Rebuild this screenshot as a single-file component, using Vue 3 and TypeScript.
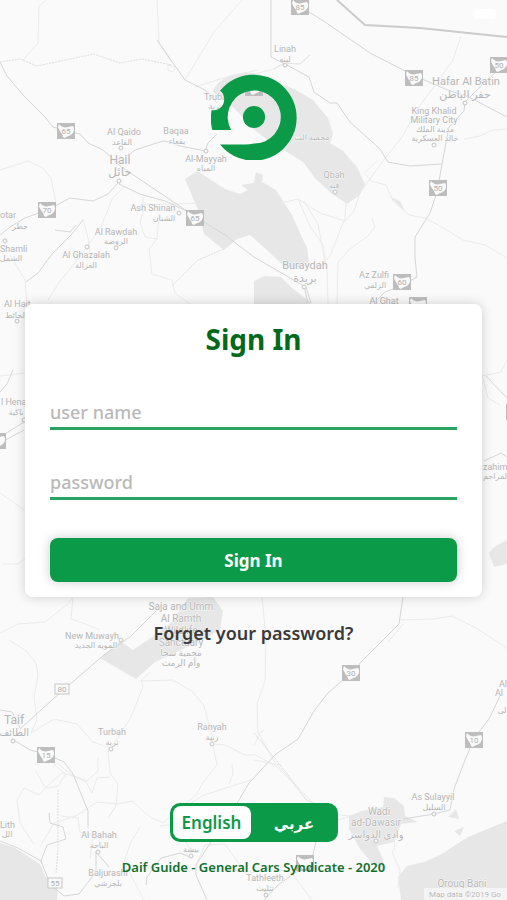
<script setup lang="ts">
import { ref } from 'vue'

interface Label {
  x: number
  y: number
  size: number
  text: string
  anchor?: 'start' | 'middle' | 'end'
}

interface Sign {
  x: number
  y: number
  text: string
}

type Language = 'en' | 'ar'

const username = ref('')
const password = ref('')
const language = ref<Language>('en')

const areas: string[] = [
  'M185 179L197 171L225 189L240 194L248 190L241 185L254 183L256 172L263 175L262 182L276 190L292 215L300 233L307 248L309 262L298 269L285 267L269 252L250 235L237 239L224 250L204 234L198 210Z',
  'M213 92C218 76 242 70 258 74L294 89L313 100L328 118L333 134L330 143L343 151L357 167L365 184L360 195L347 204L331 193L315 178L303 162L287 152L270 142L252 128L234 108Z',
  'M254 281L264 276L281 277L292 288L308 300L320 318L254 318Z',
  'M100 658L120 641L133 650L155 635L172 622L188 598L213 597L223 611L220 630L196 643L155 662L136 679L119 669Z',
  'M0 843L15 848L40 864L45 876L58 890L57 900L0 900Z',
  'M507 821L468 837L440 855L424 862L407 866L398 877L401 900L507 900Z',
  'M349 816L362 811L383 807L384 797L394 798L404 806L405 816L418 822L401 824L394 842L377 846L383 859L384 870L371 862L360 849L349 829Z',
  'M489 553L494 547L507 540L507 564L494 567Z',
  'M448 817L456 809L459 819Z',
  'M454 831L464 827L460 836Z',
  'M390 197L400 201L405 211Z',
]

const minorRoads: string[] = [
  'M46 0L39 6L38 43L23 60',
  'M242 0L214 32L185 80',
  'M157 0L159 43L172 63',
  'M168 65L176 67L173 72L168 70Z',
  'M195 87L230 76L258 70',
  'M0 170L28 161L43 168L51 178L56 203',
  'M124 187L112 199L101 227L76 262L60 281L48 300',
  'M83 219L88 238L90 252',
  'M143 197V213L140 222L145 237L157 239L149 249L152 274L172 280L175 293L190 304',
  'M143 205L200 203M157 239L159 213',
  'M10 255L25 280L27 304',
  'M255 74L274 69L284 63L300 64L310 55',
  'M461 36L453 60L436 84L418 108L402 137L383 161L362 190L346 202L345 218L330 256L317 270',
  'M377 161L364 173L371 181L386 185L393 201L409 215L425 218L440 226L463 240L485 245L507 258',
  'M281 203L298 199L320 213L345 221L354 211L359 196',
  'M298 199L310 226L323 245L327 270L328 304',
  'M304 201L318 224L326 267',
  'M372 218L375 227L368 236L350 249L338 262L337 304',
  'M464 139L480 136L493 130L507 129',
  'M0 376L25 373M0 493L26 511M3 564L18 564L26 558',
  'M482 375L488 398L500 405M482 376L501 372L507 360',
  'M0 633L18 624L45 622L68 604L73 596',
  'M73 596L71 619L85 624L100 630',
  'M9 640L25 650L36 663L38 675L34 697L37 719L31 733L54 719L77 724L93 742L111 748',
  'M151 672L141 680L143 687L131 717L118 738L108 750L110 773L118 784L116 806L108 818',
  'M141 681L173 680L193 692L204 706L212 735L213 744L225 745L245 755L254 755',
  'M213 745L217 765L202 784L197 794L163 823L150 817L132 801L118 804L97 802L76 816L54 823L40 847',
  'M98 757L98 771L86 782L73 776L62 773L49 784L39 795L24 788L17 801L20 823L34 844',
  'M110 777L97 778L92 793L85 780L72 775L57 763',
  'M36 771L44 786L47 788L58 786L66 774L53 764',
  'M254 779L229 787L204 795L185 807',
  'M232 764L233 774L229 784',
  'M262 595L266 640L265 681L257 704L258 732L273 760L295 784L309 799L320 813L350 816',
  'M254 754L277 767L292 782L307 800',
  'M400 620L434 619L452 616L476 628L507 648',
  'M403 624L388 642',
  'M140 827L131 842L124 862L134 881L144 900',
  'M160 826L176 824L185 813M190 850L184 837L174 812',
  'M254 745L260 733L264 730M254 760L281 765',
  'M338 820L350 816M393 824L395 848L392 852L400 870L398 888',
  'M90 858L93 835L80 832L78 818L61 816',
  'M196 865L205 845L225 844L246 874L269 868L291 872L312 900',
]

const dottedRoads: string[] = [
  'M0 62L20 59L37 66L94 54L120 63L142 59L172 65',
  'M274 69L284 63L300 64L310 55',
  'M172 286L198 260L224 249',
  'M254 733L285 771L306 800L319 805',
  'M58 790V850L56 874',
]

const majorRoads: string[] = [
  'M0 62L7 76L24 96L45 117L53 127L66 131L80 134L88 143L103 150L112 158L119 165L129 172L175 203L199 219L225 235L254 257L304 286',
  'M126 157L135 150L163 141L170 142L180 146L205 151L208 143L217 134',
  'M119 182L108 194L93 201L70 198L47 210L25 218L10 227L0 235',
  'M119 184L140 194L165 201L195 215',
  'M83 220L71 235L52 254L38 273L26 282',
  'M55 230L70 232L76 225',
  'M157 40L185 80L205 90L217 103',
  'M301 7L325 22L370 53L415 76L450 91L467 96L507 117',
  'M271 0L271 57L285 64L309 77L314 92L330 103L337 103L350 122L380 149L388 162L410 166L442 164',
  'M507 62L485 82L465 102L464 111L449 127L442 164L437 192L430 213L415 237L415 258L417 277L403 285L385 292L375 302',
  'M304 286L308 303M306 287L311 303',
  'M0 437L24 422M0 443L24 430',
  'M0 392L7 384L13 370',
  'M486 376L507 398',
  'M484 461L501 453L507 457',
  'M403 597L399 624L363 660L351 673L328 693L314 711L298 739L276 754L249 783L229 817L211 842L196 865L196 875L207 900',
  'M161 606L131 636L104 655L62 691L20 729',
  'M0 710L12 712L20 728',
  'M12 739L30 750L46 754L64 762L73 774L88 811L88 828',
  'M0 841L18 848L41 861L50 884L64 896L79 894L96 872L96 852L109 867',
  'M49 813L50 823L63 827L66 839L47 845L41 861',
  'M146 885L147 877L161 858L180 853L190 857',
  'M502 692L489 719L475 737L465 760L454 789L450 810L434 814L403 819',
  'M316 842L311 862L292 875L278 885L264 900',
]

const labels: Label[] = [
  { x: 285, y: 52, size: 9, text: 'Linah' },
  { x: 285, y: 62, size: 8, text: 'لينه' },
  { x: 218, y: 100, size: 9, text: 'Trubah' },
  { x: 215, y: 109, size: 8, text: 'تربة' },
  { x: 124, y: 135, size: 9, text: 'Al Qaido' },
  { x: 122, y: 145, size: 8, text: 'القاعد' },
  { x: 176, y: 134, size: 9, text: 'Baqaa' },
  { x: 177, y: 144, size: 8, text: 'بقعاء' },
  { x: 120, y: 164, size: 12, text: 'Hail' },
  { x: 120, y: 176, size: 12, text: 'حائل' },
  { x: 206, y: 162, size: 9, text: 'Al-Mayyah' },
  { x: 206, y: 171, size: 8, text: 'المياه' },
  { x: 153, y: 211, size: 9, text: 'Ash Shinan' },
  { x: 164, y: 221, size: 8, text: 'الشنان' },
  { x: 116, y: 235, size: 9, text: 'Al Rawdah' },
  { x: 116, y: 244, size: 8, text: 'الروضة' },
  { x: 86, y: 258, size: 9, text: 'Al Ghazalah' },
  { x: 86, y: 268, size: 8, text: 'الغزالة' },
  { x: 0, y: 218, size: 9, text: 'otar', anchor: 'start' },
  { x: 12, y: 229, size: 8, text: 'جطر', anchor: 'start' },
  { x: 0, y: 252, size: 9, text: 'Shamli', anchor: 'start' },
  { x: 11, y: 261, size: 8, text: 'الشمل' },
  { x: 4, y: 307, size: 9, text: 'Al Hait', anchor: 'start' },
  { x: 16, y: 318, size: 8, text: 'الحائط' },
  { x: 1, y: 405, size: 9, text: 'l Hena', anchor: 'start' },
  { x: 16, y: 415, size: 8, text: 'ناكية' },
  { x: 466, y: 85, size: 11, text: 'Hafar Al Batin' },
  { x: 465, y: 98, size: 11, text: 'حفر الباطن' },
  { x: 434, y: 114, size: 9, text: 'King Khalid' },
  { x: 434, y: 123, size: 9, text: 'Military City' },
  { x: 435, y: 132, size: 8, text: 'مدينة الملك' },
  { x: 435, y: 141, size: 8, text: 'خالد العسكرية' },
  { x: 312, y: 140, size: 8, text: 'محمية الت' },
  { x: 334, y: 178, size: 9, text: 'Qbah' },
  { x: 334, y: 188, size: 8, text: 'قبة' },
  { x: 305, y: 269, size: 11, text: 'Buraydah' },
  { x: 305, y: 282, size: 11, text: 'بريدة' },
  { x: 374, y: 278, size: 9, text: 'Az Zulfi' },
  { x: 375, y: 288, size: 8, text: 'الزلفي' },
  { x: 384, y: 304, size: 9, text: 'Al Ghat' },
  { x: 483, y: 470, size: 9, text: 'zahim', anchor: 'start' },
  { x: 495, y: 479, size: 8, text: 'لمراحم' },
  { x: 181, y: 610, size: 10, text: 'Saja and Umm' },
  { x: 181, y: 622, size: 10, text: 'Al Ramth' },
  { x: 181, y: 634, size: 10, text: 'Wildlife' },
  { x: 181, y: 646, size: 10, text: 'Sanctuary' },
  { x: 181, y: 656, size: 9, text: 'محمية سجا' },
  { x: 181, y: 666, size: 9, text: 'وأم الرمث' },
  { x: 92, y: 639, size: 9, text: 'New Muwayh' },
  { x: 96, y: 648, size: 8, text: 'المويه الجديد' },
  { x: 14, y: 724, size: 12, text: 'Taif' },
  { x: 14, y: 736, size: 10, text: 'الطائف' },
  { x: 112, y: 735, size: 9, text: 'Turbah' },
  { x: 112, y: 745, size: 8, text: 'تربة' },
  { x: 212, y: 730, size: 9, text: 'Ranyah' },
  { x: 212, y: 740, size: 8, text: 'رنية' },
  { x: 0, y: 828, size: 9, text: 'Lith', anchor: 'start' },
  { x: 7, y: 837, size: 8, text: 'الل' },
  { x: 99, y: 838, size: 9, text: 'Al Bahah' },
  { x: 99, y: 848, size: 8, text: 'الباحة' },
  { x: 108, y: 876, size: 9, text: 'Baljurashi' },
  { x: 108, y: 886, size: 8, text: 'بلجرشي' },
  { x: 191, y: 852, size: 8, text: 'بيشة' },
  { x: 265, y: 881, size: 9, text: 'Tathleeth' },
  { x: 265, y: 891, size: 8, text: 'تثليث' },
  { x: 379, y: 815, size: 10, text: 'Wadi' },
  { x: 376, y: 826, size: 10, text: 'ad-Dawasir' },
  { x: 376, y: 838, size: 10, text: 'وادي الدواسر' },
  { x: 433, y: 800, size: 9, text: 'As Sulayyil' },
  { x: 434, y: 810, size: 8, text: 'السليل' },
  { x: 499, y: 687, size: 9, text: 'Al', anchor: 'start' },
  { x: 495, y: 696, size: 9, text: 'Al', anchor: 'start' },
  { x: 502, y: 713, size: 8, text: 'لى' },
  { x: 462, y: 887, size: 10, text: 'Oroug Bani' },
]

const shields: Sign[] = [
  { x: 66, y: 131, text: '65' },
  { x: 47, y: 210, text: '70' },
  { x: 195, y: 218, text: '65' },
  { x: 300, y: 7, text: '85' },
  { x: 414, y: 78, text: '85' },
  { x: 499, y: 65, text: '50' },
  { x: 438, y: 188, text: '50' },
  { x: 402, y: 282, text: '60' },
  { x: 418, y: 305, text: '' },
  { x: -3, y: 441, text: '' },
  { x: 515, y: 412, text: '' },
  { x: 351, y: 673, text: '30' },
  { x: 474, y: 740, text: '10' },
  { x: 46, y: 755, text: '15' },
  { x: 305, y: 863, text: '' },
  { x: 254, y: 88, text: '' },
]

const plates: Sign[] = [
  { x: 62, y: 689, text: '80' },
  { x: 55, y: 883, text: '55' },
]

const towns: [number, number][] = [
  [119, 181], [121, 148], [206, 151], [179, 213], [116, 248], [87, 247],
  [5, 241], [17, 321], [465, 103], [434, 145], [285, 65], [335, 192],
  [304, 287], [13, 741], [111, 749], [212, 744], [98, 852], [191, 856],
  [376, 841], [434, 814], [121, 640], [266, 895], [24, 420],
]
</script>

<template>
  <main class="page">
    <svg
      class="map"
      viewBox="0 0 507 900"
      preserveAspectRatio="xMidYMid slice"
      aria-hidden="true"
    >
      <path v-for="d in areas" :key="d" :d="d" class="area" />
      <path v-for="d in minorRoads" :key="d" :d="d" class="road minor" />
      <path v-for="d in dottedRoads" :key="d" :d="d" class="road dotted" />
      <path v-for="d in majorRoads" :key="d" :d="d" class="road major" />
      <path d="M337 0L365 25L420 28L507 37" class="road border" />
      <circle
        v-for="[x, y] in towns"
        :key="`${x}-${y}`"
        :cx="x"
        :cy="y"
        r="2"
        class="town"
      />
      <text
        v-for="label in labels"
        :key="`${label.x}-${label.y}`"
        :x="label.x"
        :y="label.y"
        :font-size="label.size"
        :text-anchor="label.anchor ?? 'middle'"
        class="place"
      >{{ label.text }}</text>
      <g v-for="s in shields" :key="`s${s.x}-${s.y}`" :transform="`translate(${s.x} ${s.y})`">
        <rect x="-9" y="-8" width="18" height="16" fill="#bdbdbd" />
        <path
          d="M-7-7C-5-4-1-3 2-4L7-5C9-2 8 1 6 3C4 5 1 5-1 7L-3 6C-3 3-7 0-8-4Z"
          fill="#fafafa"
        />
        <text v-if="s.text" y="3" font-size="8" text-anchor="middle" class="number">{{ s.text }}</text>
      </g>
      <g v-for="p in plates" :key="`p${p.x}-${p.y}`" :transform="`translate(${p.x} ${p.y})`">
        <rect x="-7" y="-5" width="14" height="10" fill="#fafafa" stroke="#c6c6c6" />
        <text y="3" font-size="8" text-anchor="middle" class="number">{{ p.text }}</text>
      </g>
      <rect x="424" y="888" width="83" height="12" fill="#f4f4f4" />
      <text x="429" y="897" font-size="8" class="place">Map data ©2019 Go</text>
      <rect x="474" y="9" width="22" height="10" rx="4" fill="#ffffff" />
    </svg>

    <svg class="logo" viewBox="0 0 256 256" role="img" aria-label="Daif Guide">
      <path
        fill="#0b9a47"
        d="M27 210A128 128 0 1 0 27 50C39 57 42 75 37 88C31 103 18 110 2 107A128 128 0 0 0 4 167H60A79 79 0 1 1 128 207Q116 210 100 210Z"
      />
      <circle cx="128" cy="128" r="33" fill="#0b9a47" />
    </svg>

    <form class="card" @submit.prevent>
      <h1 class="title">Sign In</h1>
      <input
        v-model="username"
        class="field"
        type="text"
        placeholder="user name"
        aria-label="user name"
        autocomplete="username"
      />
      <input
        v-model="password"
        class="field"
        type="password"
        placeholder="password"
        aria-label="password"
        autocomplete="current-password"
      />
      <button class="submit" type="submit">Sign In</button>
    </form>

    <a class="forgot" href="#forgot">Forget your password?</a>

    <div class="languages" role="group" aria-label="Language">
      <button
        type="button"
        class="language"
        :class="{ active: language === 'en' }"
        :aria-pressed="language === 'en'"
        @click="language = 'en'"
      >English</button>
      <button
        type="button"
        class="language arabic"
        lang="ar"
        :class="{ active: language === 'ar' }"
        :aria-pressed="language === 'ar'"
        @click="language = 'ar'"
      >عربي</button>
    </div>

    <footer class="footer">Daif Guide - General Cars Syndicate - 2020</footer>
  </main>
</template>

<style>
body {
  margin: 0;
  background: #fafafa;
}
</style>

<style scoped>
.page {
  position: relative;
  isolation: isolate;
  box-sizing: border-box;
  display: flex;
  flex-direction: column;
  align-items: center;
  min-height: 100vh;
  padding: 74px 25px 23px;
  overflow: hidden;
  background: #fafafa;
  font-family: 'Noto Sans', 'DejaVu Sans', sans-serif;
}

.map {
  position: absolute;
  inset: 0;
  z-index: -1;
  width: 100%;
  height: 100%;
}

.area {
  fill: #e7e7e7;
}

.road {
  fill: none;
  stroke-linejoin: round;
}

.minor {
  stroke: #ebebeb;
}

.dotted {
  stroke: #dedede;
  stroke-dasharray: 2 1;
}

.major {
  stroke: #d6d6d6;
}

.border {
  stroke: #cbcbcb;
  stroke-width: 2px;
}

.town {
  fill: #fafafa;
  stroke: #c4c4c4;
}

.place {
  fill: #b6b6b6;
  stroke: #fafafa;
  stroke-width: 1px;
  paint-order: stroke;
  font-family: Roboto, 'DejaVu Sans', sans-serif;
}

.number {
  fill: #b0b0b0;
  font-family: Roboto, sans-serif;
}

.logo {
  width: 86px;
  height: 86px;
  margin-bottom: 144px;
}

.card {
  box-sizing: border-box;
  display: flex;
  flex-direction: column;
  width: 100%;
  padding: 15px 25px;
  border-radius: 8px;
  background: #ffffff;
  box-shadow: 0 0 12px rgba(0, 0, 0, 0.18);
}

.title {
  margin: 0 0 37px;
  color: #04691a;
  font-size: 28px;
  font-weight: 700;
  line-height: 40px;
  text-align: center;
}

.field {
  box-sizing: border-box;
  width: 100%;
  height: 34px;
  margin: 0 0 36px;
  padding: 0;
  border: 0;
  border-bottom: 3px solid #2ba360;
  border-radius: 0;
  outline: 0;
  background: transparent;
  color: #3a3a3a;
  font: 500 18px 'Noto Sans', sans-serif;
}

.field::placeholder {
  color: #b9b9b9;
  opacity: 1;
}

.submit {
  height: 44px;
  margin-top: 2px;
  padding: 0;
  border: 0;
  border-radius: 8px;
  background: #0b9a47;
  box-shadow: 0 0 12px rgba(0, 0, 0, 0.2);
  color: #ffffff;
  font: 700 17px 'Noto Sans', sans-serif;
  cursor: pointer;
}

.forgot {
  margin: 24px 0;
  color: #3a3a3a;
  font-size: 18px;
  font-weight: 600;
  line-height: 24px;
  text-decoration: none;
}

.languages {
  box-sizing: border-box;
  display: grid;
  grid-template-columns: 78px 81px;
  gap: 3px;
  height: 39px;
  margin-top: auto;
  padding: 3px;
  border-radius: 10px;
  background: #0b9a47;
}

.language {
  padding: 0;
  border: 0;
  border-radius: 8px;
  background: transparent;
  color: #ffffff;
  font: 600 17px 'Noto Sans', 'DejaVu Sans', sans-serif;
  cursor: pointer;
}

.arabic {
  font-size: 15px;
}

.language.active {
  background: #ffffff;
  color: #0b9a47;
}

.footer {
  margin-top: 15px;
  color: #12702f;
  font-size: 13px;
  font-weight: 600;
  line-height: 20px;
  text-align: center;
}
</style>
